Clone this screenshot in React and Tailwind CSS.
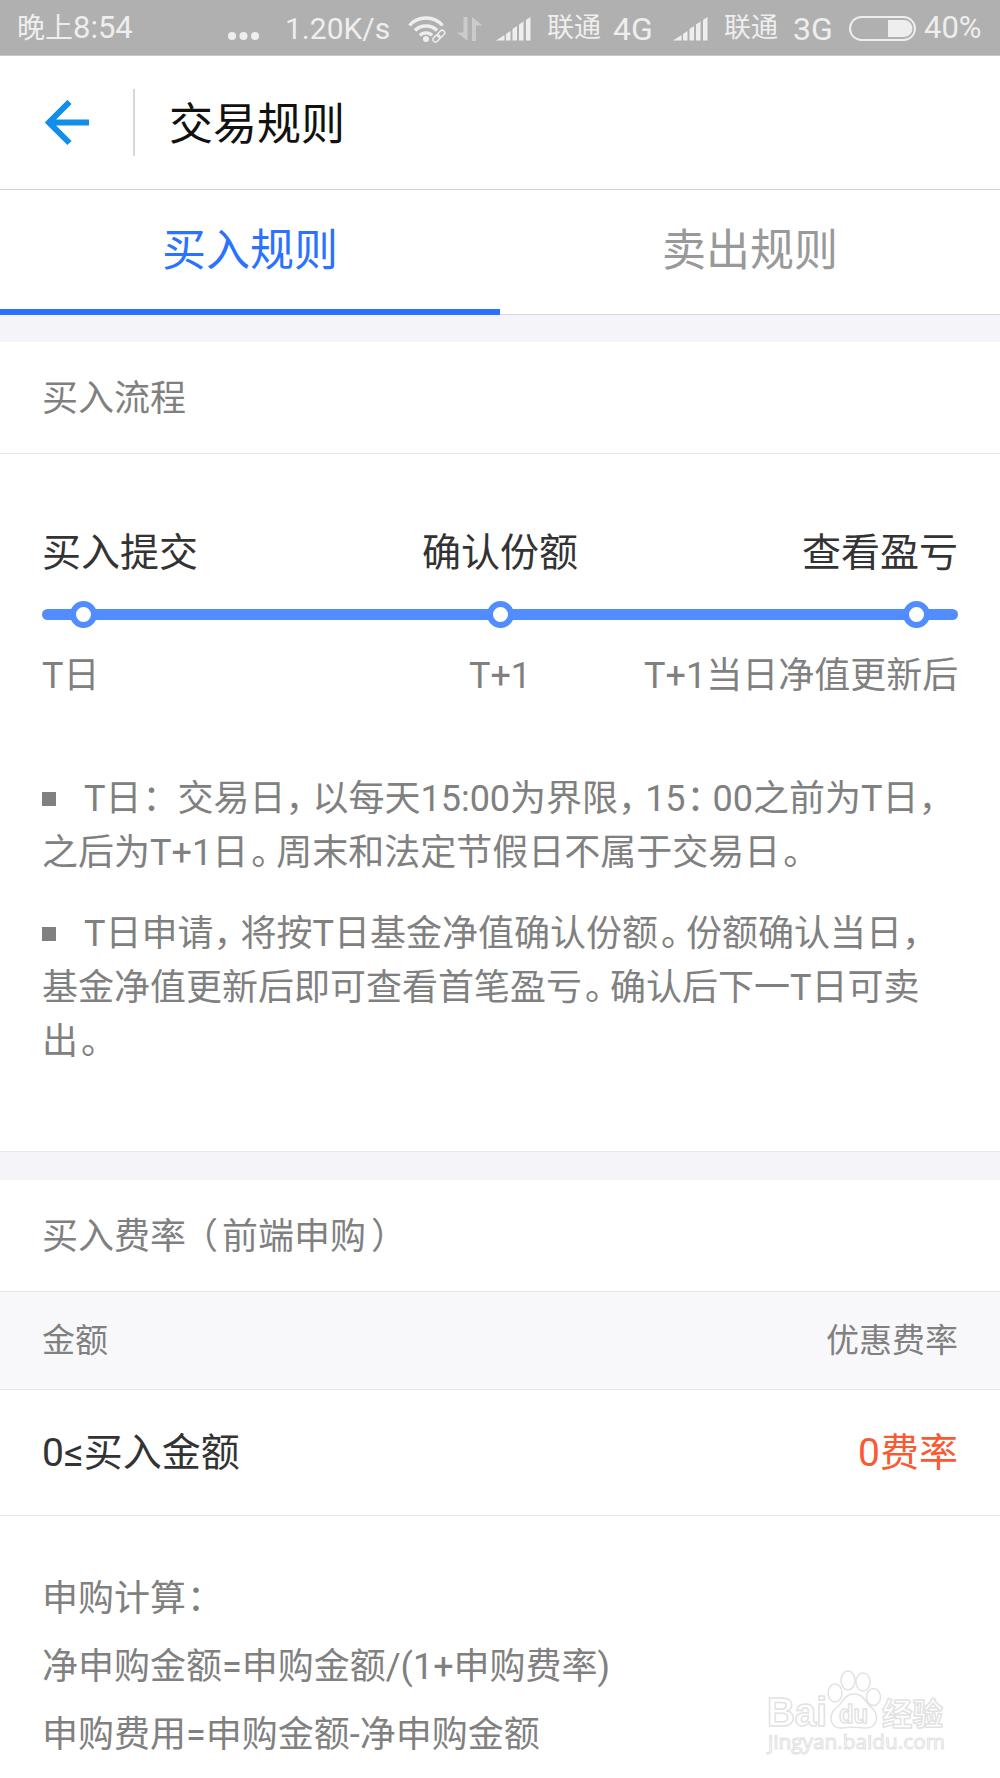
const STEPS = [
  { title: '买入提交', time: 'T日', align: 'text-left' },
  { title: '确认份额', time: 'T+1', align: 'text-center' },
  { title: '查看盈亏', time: 'T+1当日净值更新后', align: 'text-right' }
];

const NOTES = [
  ['T日： 交易日，以每天15:00为界限，15：00之前为T日，', '之后为T+1日。周末和法定节假日不属于交易日。'],
  ['T日申请，将按T日基金净值确认份额。份额确认当日，', '基金净值更新后即可查看首笔盈亏。确认后下一T日可卖', '出。']
];

const FORMULAS = ['申购计算：', '净申购金额=申购金额/(1+申购费率)', '申购费用=申购金额-净申购金额'];

// Half-width punctuation, each with its own side spacing
const PUNCTUATION = {
  '，': 'mr-[9px]',
  '。': 'ml-[3px] mr-[7px]',
  '：': 'ml-[1px] mr-[8px]',
  '（': 'ml-[14px] mr-[4px]',
  '）': 'ml-[5px]'
};

function Tight({ text }) {
  return text.split(/([，。：（）])/).map((part, i) =>
    PUNCTUATION[part] ? (
      <span key={i} className={`[font-feature-settings:'halt'] ${PUNCTUATION[part]}`}>{part}</span>
    ) : (
      part
    )
  );
}

function Signal() {
  return (
    <svg width="35" height="24" viewBox="0 0 35 24" fill="#eeeeee">
      <path d="M0 23.5 8.5 18v5.5z" />
      <path d="M10 17l4.500-3v9.500H10z" />
      <path d="M16.500 12l4.500-3v14.500h-4.500z" />
      <path d="M23 7.500l4.500-3v19H23z" />
      <path d="M30 3l4.500-3v23.500H30z" />
    </svg>
  );
}

function StatusBar() {
  return (
    <div className="flex h-14 items-center border-b border-[#c8c8c8] bg-[#b0b0b0] pt-0.5 pl-[17px] text-[31px] text-[#eeeeee] whitespace-nowrap">
      <div className="flex w-[211px] items-center">
        <span className="text-[28px]">晚上</span>
        <span>8:54</span>
      </div>
      <svg className="mt-[14px]" width="31" height="8" viewBox="0 0 31 8" fill="#eeeeee">
        <circle cx="4" cy="4" r="4" />
        <circle cx="15.500" cy="4" r="4" />
        <circle cx="27" cy="4" r="4" />
      </svg>
      <span className="ml-[26px] w-[107px] text-[30px]">1.20K/s</span>
      <svg className="ml-4" width="38" height="28" viewBox="0 0 38 28" fill="none" stroke="#eeeeee" strokeWidth="3.400">
        <path d="M1.500 10.500C10 .5 26 .5 34.500 10.500" />
        <path d="M7 15.500c5.500-6 16.500-6 22 0" />
        <path d="M12 20.500c3-3.500 9-3.500 12 0" />
        <circle cx="18" cy="24" r="3" fill="#eeeeee" stroke="none" />
        <g strokeWidth="1.500" transform="rotate(-45 31 21)">
          <rect x="23.500" y="18.500" width="8" height="5" rx="2.500" />
          <rect x="30" y="18.500" width="8" height="5" rx="2.500" />
        </g>
      </svg>
      <svg className="ml-[11px]" width="26" height="24" viewBox="0 0 26 24" fill="#cbcbcb">
        <path d="M6.500 0h4v24L0 15.500h6.500z" />
        <path d="M15 0l10.500 8.500H19V24h-4z" />
      </svg>
      <div className="ml-[13px]"><Signal /></div>
      <span className="ml-[16px] w-[66px] text-[27px]">联通</span>
      <span className="w-[60px] text-[32px]">4G</span>
      <Signal />
      <span className="ml-[16px] w-[69px] text-[27px]">联通</span>
      <span className="w-[56px] text-[32px]">3G</span>
      <svg width="67" height="25" viewBox="0 0 67 25">
        <rect x="1" y="1" width="65" height="23" rx="11.500" fill="none" stroke="#eeeeee" strokeWidth="2" />
        <path d="M39 4h16a8.500 8.500 0 0 1 0 17H39z" fill="#eeeeee" />
      </svg>
      <span className="ml-2">40%</span>
    </div>
  );
}

function TitleBar() {
  return (
    <div className="flex h-[134px] items-center border-b border-[#d0d0d0]">
      <svg className="ml-[45px]" width="44" height="46" viewBox="0 0 44 46" fill="none" stroke="#108ee9" strokeWidth="6">
        <path d="M24.500 2 4 22.500 24.500 43M4 22.500h40" />
      </svg>
      <div className="ml-11 h-[67px] w-0.5 bg-[#d8d8d8]" />
      <h1 className="ml-[34px] pt-1 text-[44px] text-[#111111]">交易规则</h1>
    </div>
  );
}

function Tabs() {
  return (
    <div className="flex h-[125px] text-[44px]">
      <div className="flex w-1/2 items-center justify-center border-b-[6px] border-[#2a72ff] pt-0.5 text-[#2a72ff]">买入规则</div>
      <div className="flex w-1/2 items-center justify-center border-b border-[#d8d8dc] pb-[3px] text-[#999999]">卖出规则</div>
    </div>
  );
}

function Steps() {
  return (
    <div className="h-[291px] px-[42px] pt-[70px]">
      <div className="grid grid-cols-3 text-[39px] leading-[58px] text-[#333333]">
        {STEPS.map(step => (
          <div key={step.title} className={step.align}>{step.title}</div>
        ))}
      </div>
      <div className="mt-[18px] flex h-7 items-center">
        <div className="flex h-[11px] w-full items-center justify-between rounded-full bg-[#528dff] px-[28px]">
          {STEPS.map(step => (
            <div key={step.title} className="size-[27px] rounded-full border-6 border-[#528dff] bg-white" />
          ))}
        </div>
      </div>
      <div className="mt-[21px] grid grid-cols-[314px_1fr_314px] text-[36px] leading-[54px] whitespace-nowrap text-[#808080]">
        {STEPS.map(step => (
          <div key={step.title} className={step.align}>{step.time}</div>
        ))}
      </div>
    </div>
  );
}

function Notes() {
  return (
    <div className="flex h-[407px] flex-col gap-[27px] border-b border-[#e8e8ea] px-[42px] pt-[27px] text-[36px] leading-[54px] whitespace-nowrap text-[#808080]">
      {NOTES.map((lines, n) => (
        <div key={n}>
          {lines.map((line, i) => (
            <div key={line} className="flex items-center">
              {i === 0 && <span className="mr-[28px] size-[14px] shrink-0 bg-[#808080]" />}
              <p className="whitespace-pre"><Tight text={line} /></p>
            </div>
          ))}
        </div>
      ))}
    </div>
  );
}

function Watermark() {
  return (
    <svg className="absolute top-[1668px] left-[764px]" width="190" height="92" viewBox="0 0 190 92" fill="#ffffff" stroke="#e2e2e2" strokeWidth="1.500">
      <g fontFamily="Liberation Sans, Noto Sans CJK SC, sans-serif" fontWeight="700">
        <text x="3" y="58" fontSize="40" textLength="60" lengthAdjust="spacingAndGlyphs">Bai</text>
        <ellipse cx="71" cy="25" rx="7" ry="9" />
        <ellipse cx="84" cy="12.500" rx="7" ry="9.500" />
        <ellipse cx="99" cy="14" rx="7" ry="9" />
        <ellipse cx="109.500" cy="29" rx="7" ry="8.500" />
        <path d="M90 26c-10 0-11 9-18 14-9 8-5 21 6 20 8-1 15-1 22 0 13 1 16-12 8-20-7-6-8-14-18-14z" />
        <text x="75" y="55" fontSize="25" textLength="29" lengthAdjust="spacingAndGlyphs">du</text>
        <text x="118" y="57" fontSize="31" textLength="61" lengthAdjust="spacingAndGlyphs">经验</text>
      </g>
      <text x="4" y="81" fontSize="20" strokeWidth="1" fontFamily="Open Sans, sans-serif" textLength="177" lengthAdjust="spacingAndGlyphs">jingyan.baidu.com</text>
    </svg>
  );
}

export default function App() {
  return (
    <div className="relative h-[1778px] w-[1000px] overflow-hidden bg-white font-['Roboto','Noto_Sans_CJK_SC',sans-serif]">
      <StatusBar />
      <TitleBar />
      <Tabs />
      <div className="h-[27px] bg-[#f4f4f9]" />
      <h2 className="flex h-28 items-center border-b border-[#e8e8ea] px-[42px] pt-0.5 text-[36px] text-[#808080]">买入流程</h2>
      <Steps />
      <Notes />
      <div className="h-7 bg-[#f4f4f9]" />
      <h2 className="flex h-28 items-center border-b border-[#e8e8ea] px-[42px] pt-0.5 text-[36px] text-[#808080]">
        <span><Tight text="买入费率（前端申购）" /></span>
      </h2>
      <div className="flex h-[98px] items-center justify-between border-b border-[#e8e8ea] bg-[#f8f8fb] px-[42px] text-[33px] text-[#808080]">
        <span>金额</span>
        <span>优惠费率</span>
      </div>
      <div className="flex h-[126px] items-center justify-between border-b border-[#e8e8ea] px-[42px] pt-px text-[39px] text-[#333333]">
        <span>0≤买入金额</span>
        <span className="text-[#f95a34]">0费率</span>
      </div>
      <div className="px-[42px] pt-[49px] text-[36px] leading-[68px] text-[#808080]">
        {FORMULAS.map(line => (
          <p key={line}><Tight text={line} /></p>
        ))}
      </div>
      <Watermark />
    </div>
  );
}
